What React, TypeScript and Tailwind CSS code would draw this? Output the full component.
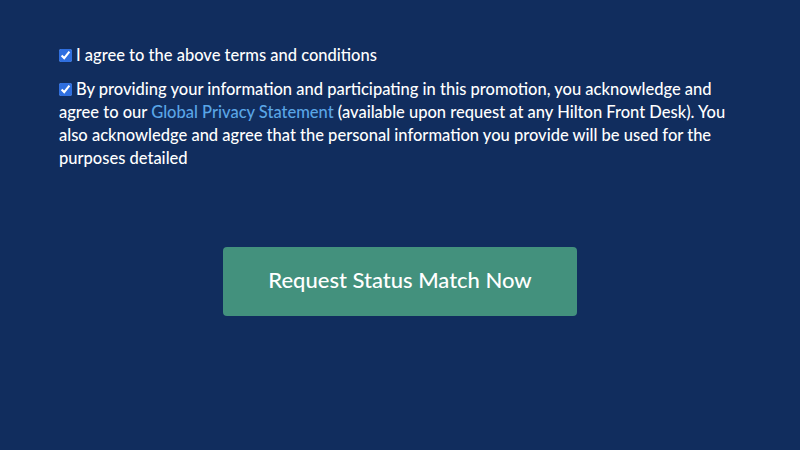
import React from 'react';

export default function App() {
  return (
    <div className="w-[800px] h-[450px] bg-[#112d5e] text-white font-['Lato','Noto_Sans',sans-serif] font-medium overflow-hidden pt-[44px]">
      <div className="pl-[59px] pr-[30px]">
        <label className="block text-[16.5px] leading-[23px]">
          <input type="checkbox" defaultChecked className="w-[13px] h-[13px] mr-[4px] align-[-1px] accent-[#2f6fe0]" />
          I agree to the above terms and conditions
        </label>
        <label className="block mt-[11px] text-[16.5px] leading-[23px]">
          <input type="checkbox" defaultChecked className="w-[13px] h-[13px] mr-[4px] align-[-1px] accent-[#2f6fe0]" />
          By providing your information and participating in this promotion, you acknowledge and
          <br />
          agree to our <a className="text-[#5aa5e6]">Global Privacy Statement</a> (available upon request at any Hilton Front Desk). You
          <br />
          also acknowledge and agree that the personal information you provide will be used for the
          <br />
          purposes detailed
        </label>
      </div>
      <div className="flex justify-center mt-[77px]">
        <button className="w-[354px] h-[69px] rounded-[4px] bg-[#43917d] text-white text-[22px] font-medium pb-[4px]">
          Request Status Match Now
        </button>
      </div>
    </div>
  );
}
